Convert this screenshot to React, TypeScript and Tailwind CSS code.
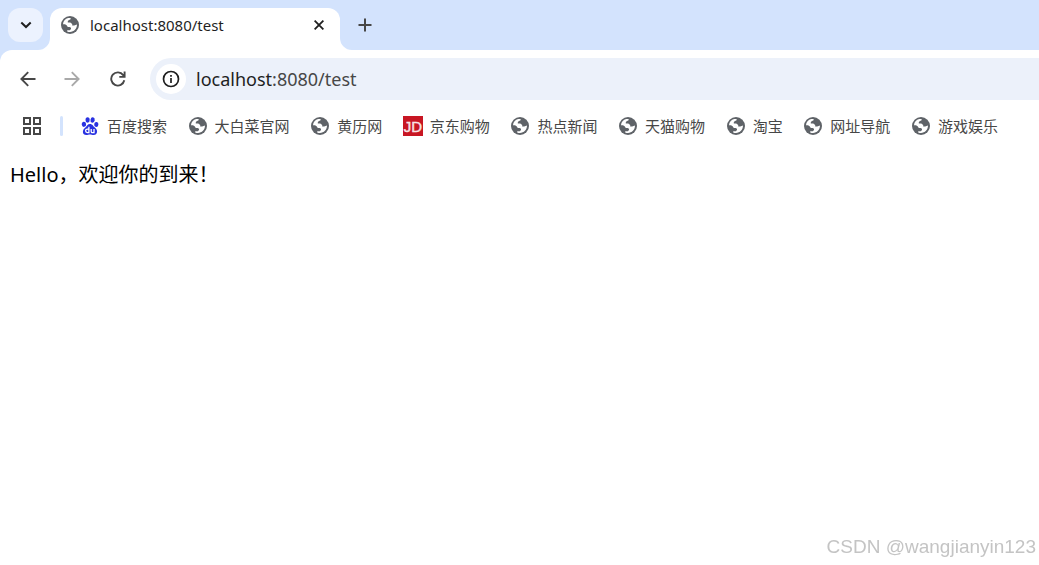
import React from "react";

function Globe() {
  return (
    <svg viewBox="0 0 20 20" className="size-5 shrink-0" aria-hidden="true">
      <circle cx="10" cy="10" r="9" fill="#5f6368" />
      <path
        d="M3 9.3C3.1 6.2 5.3 3.8 8.2 3.1C8.9 2.9 9.8 2.9 10.6 3.1V4.3L8.6 5.2L7.8 6.3V7.6H10.3L12.2 9V10.4H14.2L17 9.6C17 13.8 13.9 17 10 17C9 17 8 16.8 7.2 16.4V15.3H9.8L11 14V12.8L9.6 11.9H7.8L6.6 10.2L5 9.3Z"
        fill="#fff"
      />
    </svg>
  );
}

function Baidu() {
  return (
    <svg viewBox="0 0 20 20" className="size-5 shrink-0" aria-hidden="true">
      <g fill="#2932e1">
        <ellipse cx="3.9" cy="8.3" rx="2.2" ry="2.6" transform="rotate(-8 3.9 8.3)" />
        <ellipse cx="7.6" cy="4" rx="2.1" ry="2.7" />
        <ellipse cx="12.6" cy="4" rx="2.1" ry="2.7" transform="rotate(10 12.6 4)" />
        <ellipse cx="16.3" cy="8.4" rx="2.1" ry="2.5" transform="rotate(8 16.3 8.4)" />
        <path d="M10 8C12.6 8 13 10.3 15.4 12C18 14 17.7 19 13.7 19C11.9 19 11.3 18.4 10 18.4C8.7 18.4 7.8 19 6.3 19C2.2 19 2.1 14.2 4.6 12.2C7.1 10.2 7.5 8 10 8Z" />
      </g>
      <path d="M8.9 10.8V16.6H7.4C5 16.6 5 13.1 7.4 13.1H8.7M11.2 12.9V15.4Q11.2 16.6 12.4 16.6H14V12.9" fill="none" stroke="#fff" strokeWidth="1.3" />
    </svg>
  );
}

function Jd() {
  return (
    <svg viewBox="0 0 20 20" className="size-5 shrink-0" aria-hidden="true">
      <path d="M0 0H20V20H0Z" fill="#c81623" />
      <text x="10" y="16" textAnchor="middle" fill="#f8e4e6" stroke="#f8e4e6" strokeWidth=".4" fontSize="15" fontFamily="Liberation Sans, sans-serif">
        JD
      </text>
    </svg>
  );
}

const bookmarks = [
  { name: "百度搜索", icon: Baidu },
  { name: "大白菜官网", icon: Globe },
  { name: "黄历网", icon: Globe },
  { name: "京东购物", icon: Jd },
  { name: "热点新闻", icon: Globe },
  { name: "天猫购物", icon: Globe },
  { name: "淘宝", icon: Globe },
  { name: "网址导航", icon: Globe },
  { name: "游戏娱乐", icon: Globe },
];

export default function App() {
  return (
    <div className="flex min-h-screen flex-col overflow-x-hidden bg-white font-['Noto_Sans','Noto_Sans_CJK_SC',sans-serif] text-[#1f1f1f]">
      <header className="bg-[#d3e3fd]">
        <div className="flex items-start pt-2 pl-2">
          <button type="button" aria-label="Search tabs" className="flex h-[34px] w-[35px] shrink-0 items-center justify-center rounded-xl bg-[#ecf2fe]">
            <svg viewBox="0 0 12 12" className="size-3" fill="none" stroke="#1f1f1f" strokeWidth="2">
              <path d="M1.3 3.5L6 8L10.7 3.5" />
            </svg>
          </button>
          <div className="relative ml-[7px] flex h-[42px] w-[290px] shrink-0 items-center rounded-t-xl bg-white pr-3 pb-2 pl-[10px]">
            <svg viewBox="0 0 12 12" className="absolute bottom-0 -left-3 size-3" fill="#fff" aria-hidden="true">
              <path d="M12 0V12H0A12 12 0 0 0 12 0Z" />
            </svg>
            <svg viewBox="0 0 12 12" className="absolute -right-3 bottom-0 size-3" fill="#fff" aria-hidden="true">
              <path d="M0 0V12H12A12 12 0 0 1 0 0Z" />
            </svg>
            <Globe />
            <span className="ml-[10px] flex-1 text-[15px] leading-5">localhost:8080/test</span>
            <button type="button" aria-label="Close tab" className="flex size-[18px] items-center justify-center">
              <svg viewBox="0 0 10 10" className="size-[10px]" fill="none" stroke="#1f1f1f" strokeWidth="1.8">
                <path d="M.6.6L9.4 9.4M9.4.6L.6 9.4" />
              </svg>
            </button>
          </div>
          <button type="button" aria-label="New tab" className="ml-2 flex size-[34px] items-center justify-center">
            <svg viewBox="0 0 14 14" className="size-[14px]" fill="none" stroke="#474747" strokeWidth="2">
              <path d="M7 .5V13.5M.5 7H13.5" />
            </svg>
          </button>
        </div>
        <nav className="flex items-center rounded-tl-xl bg-white pt-2 pl-[17px]" aria-label="Navigation">
          <button type="button" aria-label="Back" className="flex size-[22px] items-center justify-center">
            <svg viewBox="0 0 16 16" className="size-4" fill="none" stroke="#474747" strokeWidth="1.9">
              <path d="M15.5 8H2M8.2 1.2L1.4 8L8.2 14.8" />
            </svg>
          </button>
          <button type="button" aria-label="Forward" disabled className="ml-[22px] flex size-[22px] items-center justify-center">
            <svg viewBox="0 0 16 16" className="size-4" fill="none" stroke="#a9a9a9" strokeWidth="1.9">
              <path d="M.5 8H14M7.8 1.2L14.6 8L7.8 14.8" />
            </svg>
          </button>
          <button type="button" aria-label="Reload" className="ml-[24px] flex size-[22px] items-center justify-center">
            <svg viewBox="0 0 16 16" className="size-4" fill="none" stroke="#474747" strokeWidth="1.9">
              <path d="M14.3 9.3A6.6 6.6 0 1 1 13.2 4.1L14.6 5.6M14.6 .5V5.9H9.3" />
            </svg>
          </button>
          <div className="ml-[21px] flex h-[42px] flex-1 items-center rounded-l-full bg-[#ecf1fa] pl-[6px]">
            <button type="button" aria-label="View site information" className="flex size-[30px] shrink-0 items-center justify-center rounded-full bg-white">
              <svg viewBox="0 0 18 18" className="size-[18px]" fill="none" stroke="#1f1f1f" strokeWidth="1.7">
                <circle cx="9" cy="9" r="7.5" />
                <path d="M9 8V13M9 5V6.7" />
              </svg>
            </button>
            <a href="#" className="ml-[10px] text-lg leading-6 text-[#474747]">
              <span className="text-[#1f1f1f]">localhost</span>:8080/test
            </a>
          </div>
        </nav>
      </header>
      <nav className="flex h-[52px] items-center pl-[22px] whitespace-nowrap" aria-label="Bookmarks">
        <button type="button" aria-label="Apps" className="flex size-5 shrink-0 items-center justify-center">
          <svg viewBox="0 0 18 18" className="size-[18px]" fill="none" stroke="#474747" strokeWidth="2">
            <path d="M1 1H7V7H1ZM11 1H17V7H11ZM1 11H7V17H1ZM11 11H17V17H11Z" />
          </svg>
        </button>
        <span className="ml-[18px] h-5 w-[3px] shrink-0 rounded-full bg-[#d3e3fd]" />
        <div className="ml-[17px] flex w-[918px] shrink-0 justify-between">
          {bookmarks.map(({ name, icon: Icon }) => (
            <a key={name} href="#" className="flex items-center gap-[7px] text-[15px] leading-5 text-[#474747]">
              <Icon />
              {name}
            </a>
          ))}
        </div>
      </nav>
      <main className="flex flex-1 flex-col px-[10px] pt-[9px] pb-1">
        <p className="text-xl leading-7 text-black">Hello，欢迎你的到来！</p>
      </main>
      <footer className="fixed right-[3px] bottom-1 font-['Liberation_Sans',sans-serif] text-[19px] leading-7 text-[#c4c4c4]">CSDN @wangjianyin123</footer>
    </div>
  );
}
